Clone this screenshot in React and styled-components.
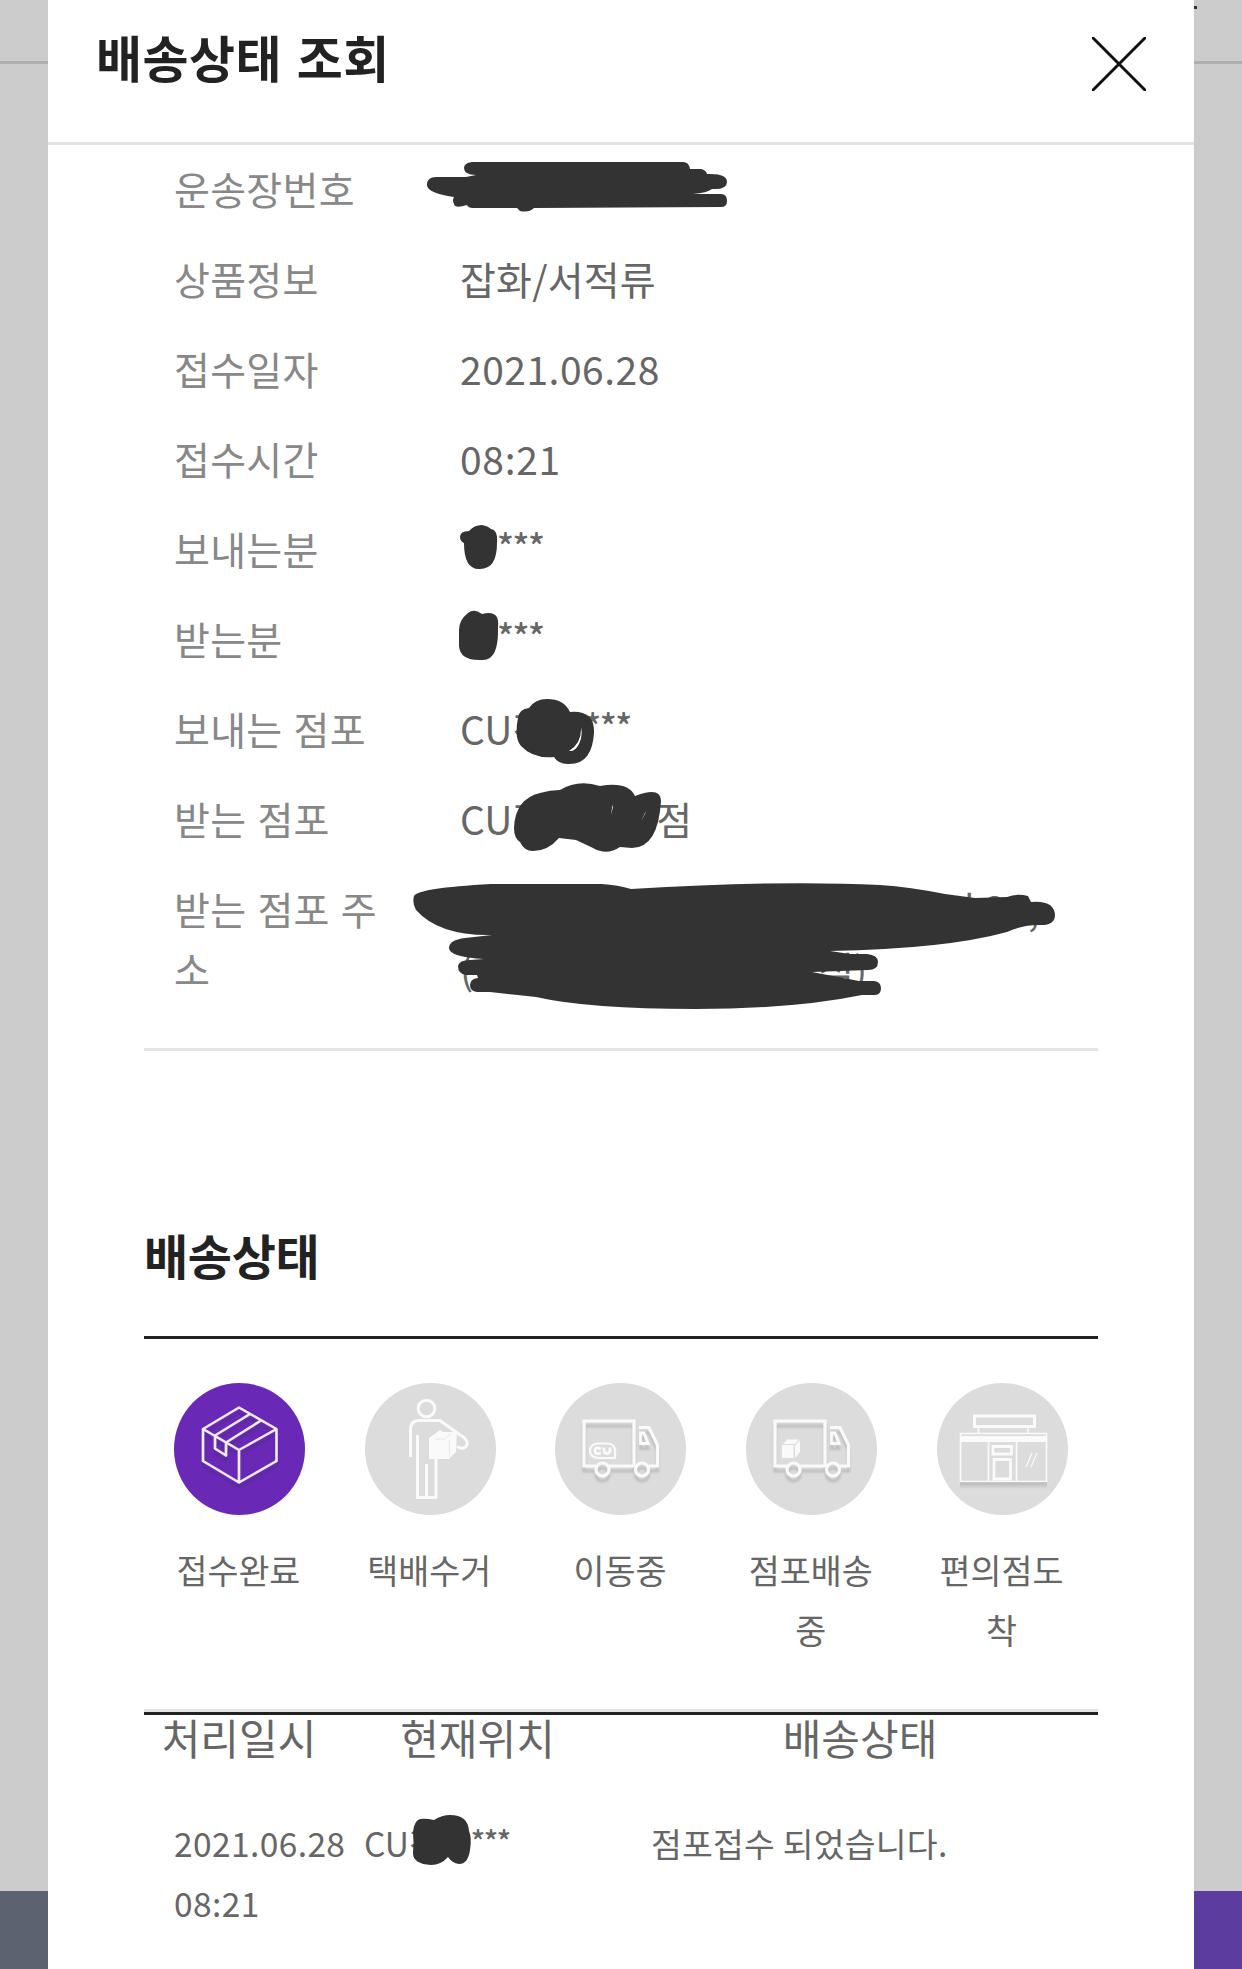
import React from "react";
import styled, { createGlobalStyle } from "styled-components";

const Global = createGlobalStyle`
  * { box-sizing: border-box; }
  body { margin: 0; background: #ccc; font-family: "Noto Sans CJK KR", sans-serif; color: #666; }
`;

const scribble = "#333";

const Page = styled.div`
  display: grid;
  grid-template-columns: 48px 1146px 48px;
  height: 1969px;
  overflow: hidden;
`;
const Backdrop = styled.div`
  display: flex;
  flex-direction: column;
  background: #ccc;
`;
const BackdropTop = styled.div`
  height: 64px;
  border-bottom: 3px solid #b0b0b0;
`;
const Speck = styled.div`
  width: 3px;
  height: 3px;
  margin-top: 6px;
  background: #333;
`;
const BottomBar = styled.div`
  height: 78px;
  margin-top: auto;
  background: ${(p) => p.$color};
`;
const Modal = styled.main`
  background: #fff;
`;
const Header = styled.header`
  display: flex;
  justify-content: space-between;
  align-items: flex-start;
  height: 145px;
  padding: 0 48px 0 48px;
  border-bottom: 3px solid #e4e4e4;
`;
const Title = styled.h1`
  margin: 19px 0 0;
  font-size: 50px;
  line-height: 74px;
  font-weight: 700;
  letter-spacing: 0.5px;
  word-spacing: 3px;
  color: #222;
`;
const CloseButton = styled.button`
  display: block;
  margin-top: 37px;
  padding: 0;
  border: 0;
  background: none;
  svg { display: block; }
`;
const Details = styled.dl`
  margin: 0 96px;
  padding: 0 30px 33px;
  border-bottom: 3px solid #e4e4e4;
`;
const Row = styled.div`
  display: grid;
  grid-template-columns: 286px 1fr;
  padding: 13px 0 17px;
  font-size: 39px;
  line-height: 60px;
`;
const Label = styled.dt`
  width: 212px;
  color: #888;
  letter-spacing: 0.3px;
  word-spacing: 2px;
  word-break: break-all;
`;
const Value = styled.dd`
  position: relative;
  margin: 0;
  letter-spacing: ${(p) => p.$track || 0}px;
  white-space: nowrap;
`;
const Stars = styled.span`
  font-size: ${(p) => (p.$small ? 30 : 35)}px;
  line-height: 1;
  vertical-align: ${(p) => (p.$small ? 4 : 5)}px;
  font-weight: 500;
  letter-spacing: ${(p) => (p.$small ? -1.6 : -1.5)}px;
`;
const Gap = styled.span`
  display: inline-block;
  width: ${(p) => p.$w}px;
`;
const Ink = styled.svg`
  position: absolute;
  left: ${(p) => p.$x}px;
  top: ${(p) => p.$y}px;
  overflow: visible;
`;
const SectionTitle = styled.h2`
  margin: 167px 96px 0;
  height: 118px;
  font-size: 48px;
  line-height: 72px;
  font-weight: 700;
  letter-spacing: -0.3px;
  color: #222;
`;
const Steps = styled.ol`
  display: grid;
  grid-template-columns: repeat(5, 1fr);
  height: 376px;
  margin: 0 96px;
  padding: 44px 0 0;
  list-style: none;
  border-top: 3px solid #222;
  border-bottom: 3px solid #e4e4e4;
`;
const Step = styled.li`
  display: flex;
  flex-direction: column;
  align-items: center;
`;
const Circle = styled.svg`
  display: block;
  width: 131px;
  height: 132px;
`;
const StepName = styled.span`
  width: 132px;
  margin: 25px 2px 0 0;
  font-size: 33.7px;
  line-height: 60px;
  text-align: center;
  word-break: break-all;
`;
const History = styled.section`
  margin: 0 96px;
  border-top: 3px solid #222;
`;
const HistoryHead = styled.div`
  display: grid;
  grid-template-columns: 190px 287px 478px;
  font-size: 42px;
  line-height: 44px;
  text-align: center;
`;
const HistoryRow = styled.div`
  display: grid;
  grid-template-columns: 190px 287px 1fr;
  padding: 54px 0 0 30px;
  font-size: 33.5px;
  line-height: 60px;
`;
const Cell = styled.div`
  position: relative;
  letter-spacing: ${(p) => p.$track || 0}px;
  white-space: nowrap;
`;

const Scrawl = ({ x, y, d }) => (
  <Ink $x={x} $y={y} width="1" height="1" fill={scribble}>
    <path d={d} />
  </Ink>
);

const Shade = ({ id, color }) => (
  <filter id={id} x="-20%" y="-20%" width="140%" height="150%">
    <feDropShadow dx="0" dy="5" stdDeviation="1.2" floodColor={color} floodOpacity="0.9" />
  </filter>
);

const Box = () => (
  <Circle viewBox="0 0 131 132">
    <defs><Shade id="boxShade" color="#5a2799" /></defs>
    <ellipse cx="65.5" cy="66" rx="65.5" ry="66" fill="#6929b6" />
    <g filter="url(#boxShade)" fill="none" stroke="#f1ebf8" strokeWidth="2.5" strokeLinejoin="round">
      <path d="M65 24.5 102.500 46V78L65 99.500 29 78V46ZM29 46 65 67 102.500 46M65 67V99.500" />
      <path d="M76 31 41 52.500V65.500L52 72.500V59.500L87 37.500" />
    </g>
  </Circle>
);

const Courier = () => (
  <Circle viewBox="0 0 131 132">
    <ellipse cx="65.5" cy="66" rx="65.5" ry="66" fill="#dcdcdc" />
    <g fill="none" stroke="#fafafa" strokeWidth="3" strokeLinejoin="round">
      <circle cx="61.500" cy="25.500" r="8.300" />
      <path d="M45.500 74V47Q45.500 37.500 54 37.500H75L100 55.500Q104 60 101 63.500Q97 67 92 63.500" />
      <path d="M52.500 52V114.500H71V76M61.500 81V113" />
    </g>
    <path d="M64 55 71 50 75 47 78 49H92L91 69 84 76H64Z" fill="#fafafa" />
    <path d="M70 56H80L86 50M84 57 85 75" fill="none" stroke="#e2e2e2" strokeWidth=".8" />
  </Circle>
);

const Truck = ({ id, children }) => (
  <Circle viewBox="0 0 131 132">
    <defs><Shade id={id} color="#bdb9b9" /></defs>
    <ellipse cx="65.5" cy="66" rx="65.5" ry="66" fill="#dcdcdc" />
    <g filter={`url(#${id})`} fill="none" stroke="#fafafa" strokeWidth="3.2">
      <path d="M41 83H29V38H79V83M54 83H80M94 83H102.500V62L94 44.500H84" />
      <path d="M85.500 50H89L93 60.500H85.500Z" strokeWidth="2.8" />
      <circle cx="47.500" cy="86.500" r="6.500" />
      <circle cx="87" cy="86.500" r="6.500" />
    </g>
    {children}
  </Circle>
);

const CuMark = () => (
  <g fill="none" stroke="#fafafa" strokeWidth="2.2">
    <path d="M43 60.500H53Q60 61 60 68V75H43Q35 74 35 68Q35 61 43 60.500Z" />
    <path d="M46 66Q40 63 40 68Q40 72 46 70M49 64.500V67Q49 70.500 52 70.500Q55 70.500 55 67V64.500" strokeWidth="2.800" />
  </g>
);

const Parcel = () => (
  <g fill="#fafafa">
    <path d="M36 62H47.500V75H36ZM37 61 41 56.500H53L48.500 61ZM49 62 54 57.500V69L49 75Z" />
  </g>
);

const Store = () => (
  <Circle viewBox="0 0 131 132">
    <defs>
      <linearGradient id="storeShade" x1="0" y1="0" x2="0" y2="1">
        <stop offset="0" stopColor="#b6b4b4" />
        <stop offset="1" stopColor="#dcdcdc" />
      </linearGradient>
    </defs>
    <ellipse cx="65.5" cy="66" rx="65.5" ry="66" fill="#dcdcdc" />
    <path d="M23 99H110V106H23Z" fill="url(#storeShade)" />
    <g fill="none" stroke="#fafafa">
      <path d="M37.500 33H97.500V43.500H37.500Z" strokeWidth="3" />
      <path d="M41.500 45V50M91 45V50M23.500 50.500H109.500V98.500H23.500ZM51.500 59V98M79.500 59V98" strokeWidth="1.700" />
      <path d="M24 56H109" strokeWidth="6" />
      <path d="M56 63.500H74.500V71H56ZM57 76.500H73.500V96H57Z" strokeWidth="2.800" />
      <path d="M89 84 95 70M94 84 100 70" strokeWidth="1.200" />
    </g>
  </Circle>
);

const steps = [
  ["접수완료", <Box />],
  ["택배수거", <Courier />],
  ["이동중", <Truck id="truckA"><CuMark /></Truck>],
  ["점포배송중", <Truck id="truckB"><Parcel /></Truck>],
  ["편의점도착", <Store />],
];

export default function App() {
  return (
    <>
      <Global />
      <Page>
        <Backdrop>
          <BackdropTop />
          <BottomBar $color="#5c626f" />
        </Backdrop>
        <Modal>
          <Header>
            <Title>배송상태 조회</Title>
            <CloseButton aria-label="닫기">
              <svg width="54" height="54" viewBox="0 0 54 54">
                <path d="M0 0 54 54M54 0 0 54" stroke="#111" strokeWidth="3" />
              </svg>
            </CloseButton>
          </Header>
          <Details>
            <Row>
              <Label>운송장번호</Label>
              <Value>
                <Scrawl x={-460} y={-158} d="M472 162H683Q689 162 690 169H701Q706 170 707 174Q727 173 727 182Q727 190 712 189Q707 193 693 194H721Q727 194 727 201Q727 207 721 207L534 208Q529 213 520 211L517 208H473Q468 208 467 205Q455 209 454 204Q452 200 454 197Q427 193 427 185Q427 177 436 177H466L476 175Q464 175 464 168Q464 163 472 162Z" />
              </Value>
            </Row>
            <Row><Label>상품정보</Label><Value $track={0.2}>잡화/서적류</Value></Row>
            <Row><Label>접수일자</Label><Value $track={0.5}>2021.06.28</Value></Row>
            <Row><Label>접수시간</Label><Value $track={0.7}>08:21</Value></Row>
            <Row>
              <Label>보내는분</Label>
              <Value>
                <Gap $w={37} /><Stars>***</Stars>
                <Scrawl x={-460} y={-518} d="M469 531Q474 525 482 525Q488 526 491 529Q498 530 497 543Q497 569 480 569Q464 570 464 543Q460 541 460 537Q460 531 469 531Z" />
              </Value>
            </Row>
            <Row>
              <Label>받는분</Label>
              <Value>
                <Gap $w={37} /><Stars>***</Stars>
                <Scrawl x={-460} y={-608} d="M468 613Q474 608 482 614Q500 609 498 627Q499 661 482 660Q460 661 459 646V630Q459 620 468 613Z" />
              </Value>
            </Row>
            <Row>
              <Label>보내는 점포</Label>
              <Value>
                CU정<Gap $w={36} /><Stars>***</Stars>
                <Scrawl x={-460} y={-698} d="M529 708Q535 699 547 699Q564 699 570 712Q595 710 594 733Q592 765 568 764Q558 764 554 757Q533 759 521 746Q514 738 518 718Q519 709 529 708ZM581 727Q582 743 569 751Q575 752 579 744Q583 736 581 727Z" />
              </Value>
            </Row>
            <Row>
              <Label>받는 점포</Label>
              <Value>
                CU정<Gap $w={108} />점
                <Scrawl x={-460} y={-788} d="M560 790Q578 779 600 786Q628 781 635 796Q661 786 661 801Q658 848 632 848L620 847Q607 856 593 848L576 840L559 838Q548 851 533 851Q524 851 520 842Q514 838 514 828Q515 799 540 793Q550 790 560 790ZM612.5 805 611 815 613 807ZM646 811 641 821 645 814Z" />
              </Value>
            </Row>
            <Row>
              <Label>받는 점포 주소</Label>
              <Value>
                <Gap $w={480} />민 20,<br />(<Gap $w={345} />점)
                <Scrawl x={-460} y={-878} d="M414 896Q418 888 491 884H602Q618 885 631 889Q780 880 880 885Q910 887 945 894L975 898 1007 897Q1017 893 1028 896L1031 902Q1055 900 1055 916Q1054 926 1039 925Q1022 925 1007 932Q945 949 830 951L850 954H867Q878 955 878 962Q878 970 868 970L812 972 859 981H874Q881 982 881 988Q881 995 875 995H862Q794 1009 695 1009Q589 1009 536 997L490 992H477Q470 991 470 985Q470 979 478 978L477 975H466Q458 974 458 966Q459 960 470 960L484 959Q449 957 449 948Q449 940 465 938L492 935Q439 936 416 910Q412 903 414 896Z" />
              </Value>
            </Row>
          </Details>
          <SectionTitle>배송상태</SectionTitle>
          <Steps>
            {steps.map(([name, icon]) => (
              <Step key={name}>{icon}<StepName>{name}</StepName></Step>
            ))}
          </Steps>
          <History>
            <HistoryHead>
              <span>처리일시</span><span>현재위치</span><span>배송상태</span>
            </HistoryHead>
            <HistoryRow>
              <Cell $track={0.4}>2021.06.28<br />08:21</Cell>
              <Cell>
                CU정<Gap $w={31} /><Stars $small>***</Stars>
                <Scrawl x={-364} y={-1813} d="M420 1819Q426 1818 434 1820Q442 1815 450 1815Q468 1815 469 1831Q472 1838 470 1850Q468 1864 459 1864Q452 1863 448 1857Q441 1865 431 1865Q413 1864 413 1853Q414 1843 413 1832Q414 1821 420 1819Z" />
              </Cell>
              <Cell $track={0.2}>점포접수 되었습니다.</Cell>
            </HistoryRow>
          </History>
        </Modal>
        <Backdrop>
          <BackdropTop><Speck /></BackdropTop>
          <BottomBar $color="#5c3d9f" />
        </Backdrop>
      </Page>
    </>
  );
}
